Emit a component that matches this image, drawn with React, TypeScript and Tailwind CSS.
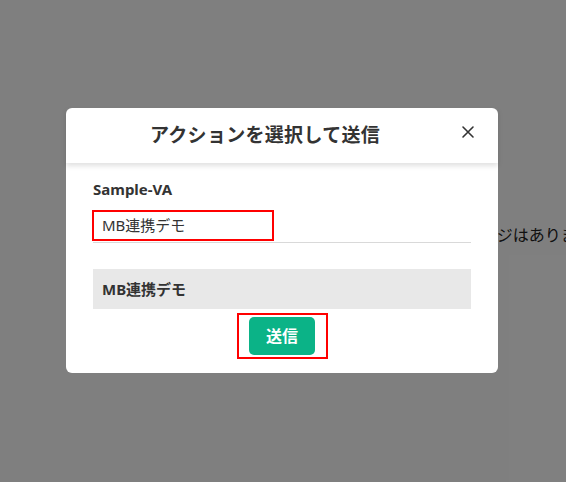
export default function App() {
	return (
		<div
			className="relative w-[566px] h-[482px] overflow-hidden bg-white text-[#333]"
			style={{ fontFamily: '"Noto Sans", "Noto Sans CJK JP", sans-serif' }}
		>
			<div className="pt-[223px] pl-[433px] whitespace-nowrap text-[16px] text-[#222]">
				メッセージはありません
			</div>

			<div className="absolute inset-0 bg-black/50 flex items-start pl-[66px] pt-[108px]">
				<div className="w-[432px] h-[265px] bg-white rounded-[6px] flex flex-col">
					<div className="h-[55px] flex items-center pl-[4px] pr-[22px] shadow-[0_3px_5px_rgba(0,0,0,0.12)]">
						<h2 className="flex-1 text-center text-[19px] font-bold text-[#333] tracking-[0.3px]">アクションを選択して送信</h2>
						<button className="text-[#333] -mt-[7px]">
							<svg width="16" height="16" viewBox="0 0 16 16" fill="none" stroke="currentColor" strokeWidth="1.6" strokeLinecap="round">
								<path d="M3 3l10 10M13 3L3 13" />
							</svg>
						</button>
					</div>

					<div className="px-[27px] pt-[15px] flex flex-col">
						<div className="text-[15px] font-bold text-[#333] leading-[22px]">Sample-VA</div>
						<div className="mt-[10px] border-b border-[#d9d9d9] h-[33px]">
							<div className="w-[182px] h-[31px] -ml-[1px] border-2 border-[#ff0000] flex items-center pl-[8px] text-[15px] text-[#333]">
								MB連携デモ
							</div>
						</div>
						<div className="mt-[26px] h-[40px] bg-[#e8e8e8] flex items-center pl-[9px] text-[15px] font-bold text-[#333]">
							MB連携デモ
						</div>
						<div className="flex justify-center mt-[4px]">
							<div className="w-[91px] h-[46px] border-2 border-[#ff0000] flex items-center justify-center">
								<button className="w-[66px] h-[38px] rounded-[5px] bg-[#0bb387] text-white text-[16px] font-bold">
									送信
								</button>
							</div>
						</div>
					</div>
				</div>
			</div>
		</div>
	);
}
